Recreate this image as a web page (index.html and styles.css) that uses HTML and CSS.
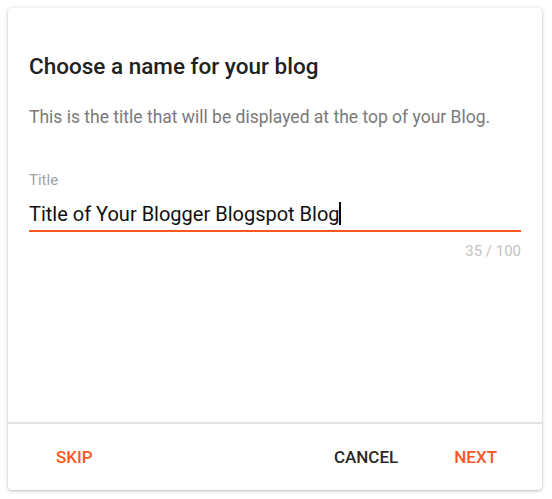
FILE: index.html
```html
<!DOCTYPE html>
<html lang="en">
<head>
<meta charset="utf-8">
<title>Choose a name for your blog</title>
<link rel="stylesheet" href="styles.css">
</head>
<body>
<div class="dialog">
  <div class="content">
    <h1 class="heading">Choose a name for your blog</h1>
    <p class="subtitle">This is the title that will be displayed at the top of your Blog.</p>
    <div class="field">
      <label class="label">Title</label>
      <div class="input"><span class="value">Title of Your Blogger Blogspot Blog</span><span class="caret"></span></div>
      <div class="counter">35 / 100</div>
    </div>
  </div>
  <div class="footer">
    <button class="btn btn-accent">SKIP</button>
    <div class="spacer"></div>
    <button class="btn btn-plain">CANCEL</button>
    <button class="btn btn-accent">NEXT</button>
  </div>
</div>
</body>
</html>
```
FILE: styles.css
```css
html, body {
  margin: 0;
  padding: 0;
  background: #ffffff;
  font-family: Roboto, "Liberation Sans", Arial, sans-serif;
}
body {
  padding: 8px 10px 9px 8px;
}
.dialog {
  width: 534px;
  height: 482px;
  background: #fff;
  border-radius: 4px;
  box-shadow: 0 1px 3px rgba(0,0,0,0.22), 0 0 6px rgba(0,0,0,0.08);
  display: flex;
  flex-direction: column;
  box-sizing: border-box;
}
.content {
  flex: 1;
  padding: 45px 21px 0 21px;
}
.heading {
  margin: 0;
  font-size: 22.5px;
  line-height: 26px;
  font-weight: 500;
  color: #212121;
}
.subtitle {
  margin: 26px 0 0 0;
  font-size: 17.5px;
  line-height: 24px;
  color: #7a7a7a;
}
.field {
  margin-top: 43px;
}
.label {
  display: block;
  font-size: 15px;
  line-height: 16px;
  color: #a3a3a3;
}
.input {
  margin-top: 14px;
  display: flex;
  align-items: flex-start;
  padding-bottom: 4px;
  border-bottom: 2px solid #ff5722;
  font-size: 20px;
  color: #111;
}
.value {
  line-height: 24px;
}
.caret {
  width: 2px;
  height: 23px;
  margin-left: -1px;
  background: #000;
}
.counter {
  margin-top: 11px;
  text-align: right;
  font-size: 15px;
  line-height: 16px;
  color: #c2c2c2;
}
.footer {
  height: 66px;
  border-top: 2px solid #e2e2e2;
  display: flex;
  align-items: center;
  padding: 0 45px 0 48px;
}
.spacer {
  flex: 1;
}
.btn {
  background: none;
  border: 0;
  font-family: Roboto, "Liberation Sans", Arial, sans-serif;
  font-size: 17px;
  font-weight: 500;
  padding: 0;
  height: 36px;
}
.btn-accent {
  color: #ff5722;
}
.btn-plain {
  color: #2a2a2a;
  margin-right: 56px;
}
```
